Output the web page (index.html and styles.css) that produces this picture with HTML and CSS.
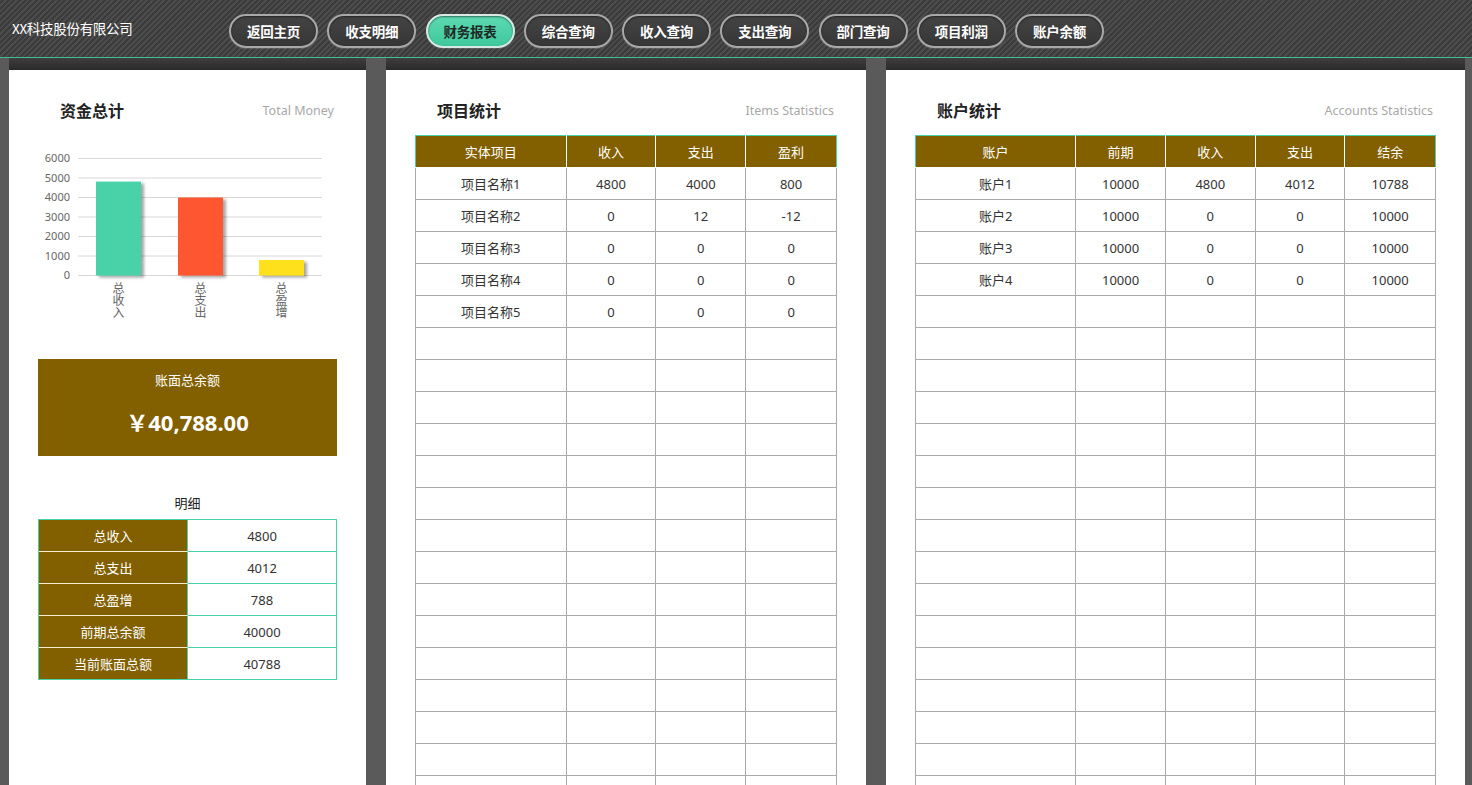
FILE: index.html
```html
<!DOCTYPE html>
<html lang="zh-CN">
<head>
<meta charset="utf-8">
<title>财务报表</title>
<link rel="stylesheet" href="styles.css">
</head>
<body>
<header class="topbar">
  <div class="brand">XX科技股份有限公司</div>
  <nav class="nav">
    <a class="nav-btn">返回主页</a>
    <a class="nav-btn">收支明细</a>
    <a class="nav-btn active">财务报表</a>
    <a class="nav-btn">综合查询</a>
    <a class="nav-btn">收入查询</a>
    <a class="nav-btn">支出查询</a>
    <a class="nav-btn">部门查询</a>
    <a class="nav-btn">项目利润</a>
    <a class="nav-btn">账户余额</a>
  </nav>
</header>
<main class="main">
  <section class="panel panel-money">
    <div class="panel-top"></div>
    <div class="panel-body">
      <div class="panel-head"><h2>资金总计</h2><span class="sub">Total Money</span></div>
      <svg class="chart" width="299" height="190" viewBox="0 0 299 190">
        <defs>
          <filter id="sh" x="-20%" y="-20%" width="150%" height="150%">
            <feDropShadow dx="3" dy="2" stdDeviation="1.5" flood-color="#000" flood-opacity="0.35"/>
          </filter>
        </defs>
        <g class="grid">
          <line x1="40" x2="284" y1="18.5" y2="18.5"/>
          <line x1="40" x2="284" y1="38" y2="38"/>
          <line x1="40" x2="284" y1="57.5" y2="57.5"/>
          <line x1="40" x2="284" y1="77" y2="77"/>
          <line x1="40" x2="284" y1="96.5" y2="96.5"/>
          <line x1="40" x2="284" y1="116" y2="116"/>
          <line x1="40" x2="284" y1="135.5" y2="135.5"/>
        </g>
        <g class="ylab">
          <text x="32" y="22">6000</text>
          <text x="32" y="41.5">5000</text>
          <text x="32" y="61">4000</text>
          <text x="32" y="80.5">3000</text>
          <text x="32" y="100">2000</text>
          <text x="32" y="119.5">1000</text>
          <text x="32" y="139">0</text>
        </g>
        <rect x="58" y="41.6" width="45" height="93.9" fill="#48d1a8" filter="url(#sh)"/>
        <rect x="140" y="57.5" width="45" height="78" fill="#ff5733" filter="url(#sh)"/>
        <rect x="221" y="120" width="45" height="15.5" fill="#ffe01a" filter="url(#sh)"/>
        <g class="xlab">
          <text x="80.5" y="142">总收入</text>
          <text x="162.5" y="142">总支出</text>
          <text x="243.5" y="142">总盈增</text>
        </g>
      </svg>
      <div class="balance">
        <div class="balance-label">账面总余额</div>
        <div class="balance-value">￥40,788.00</div>
      </div>
      <div class="detail-title">明细</div>
      <table class="detail">
        <tr><td class="k">总收入</td><td class="v">4800</td></tr>
        <tr><td class="k">总支出</td><td class="v">4012</td></tr>
        <tr><td class="k">总盈增</td><td class="v">788</td></tr>
        <tr><td class="k">前期总余额</td><td class="v">40000</td></tr>
        <tr><td class="k">当前账面总额</td><td class="v">40788</td></tr>
      </table>
    </div>
  </section>

  <section class="panel panel-items">
    <div class="panel-top"></div>
    <div class="panel-body">
      <div class="panel-head"><h2>项目统计</h2><span class="sub">Items Statistics</span></div>
      <table class="grid-table">
        <colgroup><col style="width:151px"><col style="width:90px"><col style="width:90px"><col style="width:91px"></colgroup>
        <thead><tr><th>实体项目</th><th>收入</th><th>支出</th><th>盈利</th></tr></thead>
        <tbody>
          <tr><td>项目名称1</td><td>4800</td><td>4000</td><td>800</td></tr>
          <tr><td>项目名称2</td><td>0</td><td>12</td><td>-12</td></tr>
          <tr><td>项目名称3</td><td>0</td><td>0</td><td>0</td></tr>
          <tr><td>项目名称4</td><td>0</td><td>0</td><td>0</td></tr>
          <tr><td>项目名称5</td><td>0</td><td>0</td><td>0</td></tr>
          <tr><td></td><td></td><td></td><td></td></tr>
          <tr><td></td><td></td><td></td><td></td></tr>
          <tr><td></td><td></td><td></td><td></td></tr>
          <tr><td></td><td></td><td></td><td></td></tr>
          <tr><td></td><td></td><td></td><td></td></tr>
          <tr><td></td><td></td><td></td><td></td></tr>
          <tr><td></td><td></td><td></td><td></td></tr>
          <tr><td></td><td></td><td></td><td></td></tr>
          <tr><td></td><td></td><td></td><td></td></tr>
          <tr><td></td><td></td><td></td><td></td></tr>
          <tr><td></td><td></td><td></td><td></td></tr>
          <tr><td></td><td></td><td></td><td></td></tr>
          <tr><td></td><td></td><td></td><td></td></tr>
          <tr><td></td><td></td><td></td><td></td></tr>
          <tr><td></td><td></td><td></td><td></td></tr>
          <tr><td></td><td></td><td></td><td></td></tr>
          <tr><td></td><td></td><td></td><td></td></tr>
        </tbody>
      </table>
    </div>
  </section>

  <section class="panel panel-accounts">
    <div class="panel-top"></div>
    <div class="panel-body">
      <div class="panel-head"><h2>账户统计</h2><span class="sub">Accounts Statistics</span></div>
      <table class="grid-table">
        <colgroup><col style="width:161px"><col style="width:90px"><col style="width:90px"><col style="width:90px"><col style="width:91px"></colgroup>
        <thead><tr><th>账户</th><th>前期</th><th>收入</th><th>支出</th><th>结余</th></tr></thead>
        <tbody>
          <tr><td>账户1</td><td>10000</td><td>4800</td><td>4012</td><td>10788</td></tr>
          <tr><td>账户2</td><td>10000</td><td>0</td><td>0</td><td>10000</td></tr>
          <tr><td>账户3</td><td>10000</td><td>0</td><td>0</td><td>10000</td></tr>
          <tr><td>账户4</td><td>10000</td><td>0</td><td>0</td><td>10000</td></tr>
          <tr><td></td><td></td><td></td><td></td><td></td></tr>
          <tr><td></td><td></td><td></td><td></td><td></td></tr>
          <tr><td></td><td></td><td></td><td></td><td></td></tr>
          <tr><td></td><td></td><td></td><td></td><td></td></tr>
          <tr><td></td><td></td><td></td><td></td><td></td></tr>
          <tr><td></td><td></td><td></td><td></td><td></td></tr>
          <tr><td></td><td></td><td></td><td></td><td></td></tr>
          <tr><td></td><td></td><td></td><td></td><td></td></tr>
          <tr><td></td><td></td><td></td><td></td><td></td></tr>
          <tr><td></td><td></td><td></td><td></td><td></td></tr>
          <tr><td></td><td></td><td></td><td></td><td></td></tr>
          <tr><td></td><td></td><td></td><td></td><td></td></tr>
          <tr><td></td><td></td><td></td><td></td><td></td></tr>
          <tr><td></td><td></td><td></td><td></td><td></td></tr>
          <tr><td></td><td></td><td></td><td></td><td></td></tr>
          <tr><td></td><td></td><td></td><td></td><td></td></tr>
          <tr><td></td><td></td><td></td><td></td><td></td></tr>
          <tr><td></td><td></td><td></td><td></td><td></td></tr>
        </tbody>
      </table>
    </div>
  </section>
</main>
</body>
</html>
```

FILE: styles.css
```css
* { box-sizing: border-box; }
html, body {
  margin: 0;
  height: 100%;
  overflow: hidden;
}
body {
  font-family: "Noto Sans", "Noto Sans CJK SC", sans-serif;
  background: #5a5a5a;
  color: #333;
}

.topbar {
  height: 58px;
  display: flex;
  align-items: flex-start;
  background: repeating-linear-gradient(-45deg, #4c4c4c 0 2px, #3b3b3b 2px 4px);
  border-bottom: 1px solid #3fbf8f;
}
.brand {
  width: 229px;
  padding-left: 12px;
  margin-top: 18px;
  font-size: 13.5px;
  line-height: 20px;
  color: #fff;
  letter-spacing: -0.3px;
  font-family: "Noto Sans CJK SC", sans-serif;
}
.nav {
  display: flex;
  gap: 9.25px;
  margin-top: 14px;
}
.nav-btn {
  width: 89px;
  height: 34px;
  border-radius: 17px;
  border: 2px solid #a8a8a8;
  background: linear-gradient(#444, #363636);
  box-shadow: inset 0 1px 2px rgba(0,0,0,0.5), 0 1px 1px rgba(255,255,255,0.15);
  color: #fff;
  font-family: "Noto Sans CJK SC", sans-serif;
  font-weight: 700;
  font-size: 13.5px;
  display: flex;
  align-items: center;
  justify-content: center;
  letter-spacing: -0.2px;
}
.nav-btn.active {
  background: linear-gradient(#5ddab2, #3fc89c);
  border-color: #d8e8e2;
  color: #1e2a26;
}

.main {
  display: flex;
  gap: 20px;
  padding-left: 9px;
  height: calc(100vh - 58px);
  overflow: hidden;
}
.panel {
  background: #fff;
  display: flex;
  flex-direction: column;
  flex: none;
}
.panel-money { width: 357px; }
.panel-items { width: 480px; }
.panel-accounts { width: 579px; }
.panel-top {
  height: 12px;
  background: linear-gradient(#3e3e3e, #2a2a2a);
  flex: none;
}
.panel-body {
  padding: 20px 29px 0 29px;
}
.panel-head {
  height: 40px;
  display: flex;
  align-items: center;
  justify-content: space-between;
  padding: 0 3px 0 22px;
  margin-bottom: 5px;
}
.panel-head h2 {
  margin: 0;
  font-size: 16px;
  font-weight: 700;
  color: #222;
  font-family: "Noto Sans CJK SC", sans-serif;
}
.panel-head .sub {
  font-size: 12.5px;
  color: #a8a8a8;
  font-family: "Noto Sans", sans-serif;
}

.chart { display: block; margin-top: 10px; }
.chart .grid line { stroke: #d8d8d8; stroke-width: 1; }
.chart .ylab text {
  font-family: "Noto Sans", sans-serif;
  font-size: 11px;
  fill: #666;
  text-anchor: end;
}
.chart .xlab text {
  font-family: "Noto Sans CJK SC", sans-serif;
  font-size: 12px;
  fill: #666;
  writing-mode: vertical-rl;
  text-anchor: start;
}

.balance {
  margin-top: 29px;
  height: 97px;
  background: #826000;
  color: #fff;
  display: flex;
  flex-direction: column;
  align-items: center;
  padding-top: 11px;
}
.balance-label {
  font-size: 13px;
  line-height: 20px;
  font-family: "Noto Sans CJK SC", sans-serif;
}
.balance-value {
  margin-top: 17px;
  font-size: 22px;
  line-height: 30px;
  font-weight: 700;
  font-family: "Noto Sans", "Noto Sans CJK SC", sans-serif;
}
.detail-title {
  margin-top: 38px;
  text-align: center;
  font-size: 13px;
  line-height: 18px;
  color: #222;
  font-family: "Noto Sans CJK SC", sans-serif;
}
.detail {
  margin-top: 7px;
  width: 299px;
  border-spacing: 0;
  border: 1px solid #48d1a8;
  table-layout: fixed;
  font-size: 13px;
}
.detail td {
  box-sizing: content-box;
  height: 31px;
  padding: 0;
  text-align: center;
  border-top: 1px solid #48d1a8;
}
.detail tr:first-child td { border-top: none; }
.detail td.k {
  width: 148px;
  background: #826000;
  color: #fff;
  border-right: 1px solid #48d1a8;
  border-top-color: #f4eecb;
  font-family: "Noto Sans CJK SC", sans-serif;
}
.detail td.v {
  color: #333;
  font-family: "Noto Sans", sans-serif;
}

.grid-table {
  border-collapse: collapse;
  table-layout: fixed;
  font-size: 13px;
  font-family: "Noto Sans", "Noto Sans CJK SC", sans-serif;
}
.grid-table th {
  height: 32px;
  padding: 0;
  background: #826000;
  color: #fff;
  font-weight: 400;
  border: 1px solid #fff;
  border-top-color: #48d1a8;
}
.grid-table th:first-child { border-left-color: #48d1a8; }
.grid-table th:last-child { border-right-color: #48d1a8; }
.grid-table td {
  height: 32px;
  padding: 0;
  text-align: center;
  color: #333;
  border: 1px solid #aaa;
}
```
